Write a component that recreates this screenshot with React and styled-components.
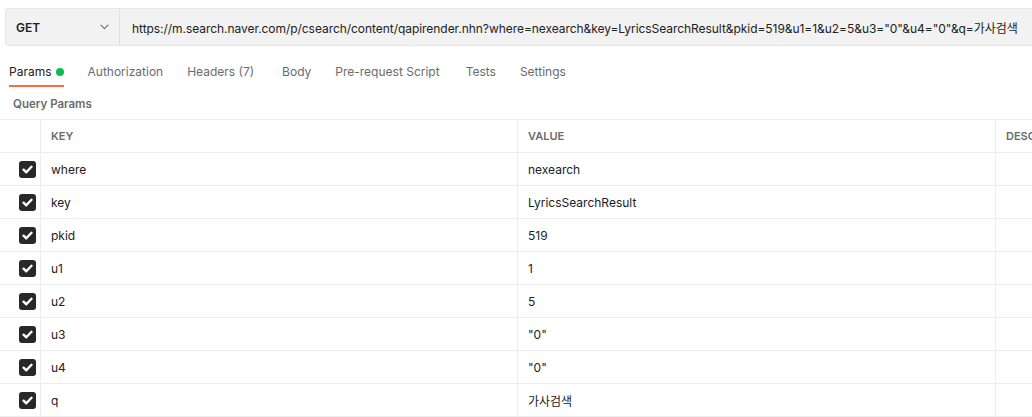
import React from "react";
import styled, { createGlobalStyle } from "styled-components";

const Global = createGlobalStyle`
  html, body { margin: 0; padding: 0; background: #ffffff; }
  body {
    font-family: Inter, "Noto Sans", "Noto Sans CJK KR", sans-serif;
    font-size: 12px;
    color: #212121;
    overflow: hidden;
  }
`;

const Page = styled.div`
  width: 1032px;
  height: 417px;
  overflow: hidden;
  display: flex;
  flex-direction: column;
`;

const UrlBar = styled.div`
  margin: 8px 0 0 5px;
  height: 39px;
  box-sizing: border-box;
  display: flex;
  align-items: stretch;
  background: #f2f2f2;
  border: 1px solid #e6e6e6;
  border-right: none;
  border-radius: 4px 0 0 4px;
  white-space: nowrap;
  overflow: hidden;
`;

const Method = styled.div`
  width: 114px;
  flex: none;
  box-sizing: border-box;
  display: flex;
  align-items: center;
  justify-content: space-between;
  padding: 0 10px 0 10px;
  border-right: 1px solid #e0e0e0;
  font-weight: 600;
  font-size: 12px;
  color: #212121;
`;

const UrlText = styled.div`
  display: flex;
  align-items: center;
  padding-left: 12px;
  font-size: 12px;
  color: #212121;
  letter-spacing: -0.05px;
`;

const Tabs = styled.div`
  display: flex;
  padding-left: 9px;
  gap: 24px;
`;

const Tab = styled.div`
  display: flex;
  align-items: center;
  padding: 18px 0 5px;
  line-height: 16px;
  border-bottom: 2px solid ${p => (p.$active ? "#ff6c37" : "transparent")};
  color: ${p => (p.$active ? "#212121" : "#6b6b6b")};
  font-size: 12px;
  margin-right: ${p => p.$extra || 0}px;
`;

const Dot = styled.span`
  width: 8px;
  height: 8px;
  border-radius: 50%;
  background: #0cbb52;
  margin-left: 4px;
  display: inline-block;
`;

const SectionTitle = styled.div`
  margin: 9px 0 7px 13px;
  line-height: 16px;
  font-size: 11.5px;
  font-weight: 600;
  color: #6b6b6b;
`;

const Table = styled.div`
  display: grid;
  grid-template-columns: 41px 477px 478px 1fr;
  border-top: 1px solid #ededed;
`;

const Cell = styled.div`
  height: 33px;
  box-sizing: border-box;
  border-bottom: 1px solid #ededed;
  border-right: ${p => (p.$last ? "none" : "1px solid #ededed")};
  display: flex;
  align-items: center;
  justify-content: ${p => (p.$check ? "flex-end" : "flex-start")};
  padding: ${p => (p.$check ? "0 4px 0 0" : "0 0 0 10px")};
  white-space: nowrap;
  overflow: hidden;
  font-size: ${p => (p.$head ? "11px" : "12px")};
  font-weight: ${p => (p.$head ? 600 : 400)};
  color: ${p => (p.$head ? "#6b6b6b" : "#212121")};
`;

const Check = styled.span`
  width: 17px;
  height: 17px;
  border-radius: 3px;
  background: #282828;
  display: flex;
  align-items: center;
  justify-content: center;
`;

const Chevron = () => (
  <svg width="9" height="6" viewBox="0 0 9 6" fill="none">
    <path d="M1 1.2l3.5 3.5L8 1.2" stroke="#6b6b6b" strokeWidth="1.1" strokeLinecap="round" strokeLinejoin="round" />
  </svg>
);

const CheckMark = () => (
  <svg width="11" height="9" viewBox="0 0 11 9" fill="none">
    <path d="M1.6 4.7l2.7 2.6L9.5 1.8" stroke="#ffffff" strokeWidth="2.4" strokeLinecap="round" strokeLinejoin="round" />
  </svg>
);

const params = [
  ["where", "nexearch"],
  ["key", "LyricsSearchResult"],
  ["pkid", "519"],
  ["u1", "1"],
  ["u2", "5"],
  ["u3", '"0"'],
  ["u4", '"0"'],
  ["q", "가사검색"],
];

const tabs = [
  { label: "Params", active: true, dot: true },
  { label: "Authorization" },
  { label: "Headers (7)", extra: 4 },
  { label: "Body" },
  { label: "Pre-request Script", extra: 2 },
  { label: "Tests" },
  { label: "Settings" },
];

export default function App() {
  return (
    <Page>
      <Global />
      <UrlBar>
        <Method>
          <span>GET</span>
          <Chevron />
        </Method>
        <UrlText>
          https://m.search.naver.com/p/csearch/content/qapirender.nhn?where=nexearch&amp;key=LyricsSearchResult&amp;pkid=519&amp;u1=1&amp;u2=5&amp;u3="0"&amp;u4="0"&amp;q=가사검색
        </UrlText>
      </UrlBar>
      <Tabs>
        {tabs.map(t => (
          <Tab key={t.label} $active={t.active} $extra={t.extra}>
            {t.label}
            {t.dot && <Dot />}
          </Tab>
        ))}
      </Tabs>
      <SectionTitle>Query Params</SectionTitle>
      <Table>
        <Cell $head />
        <Cell $head>KEY</Cell>
        <Cell $head>VALUE</Cell>
        <Cell $head $last>DESCRIPTION</Cell>
        {params.map(([k, v]) => (
          <React.Fragment key={k}>
            <Cell $check>
              <Check><CheckMark /></Check>
            </Cell>
            <Cell>{k}</Cell>
            <Cell>{v}</Cell>
            <Cell $last />
          </React.Fragment>
        ))}
      </Table>
    </Page>
  );
}
